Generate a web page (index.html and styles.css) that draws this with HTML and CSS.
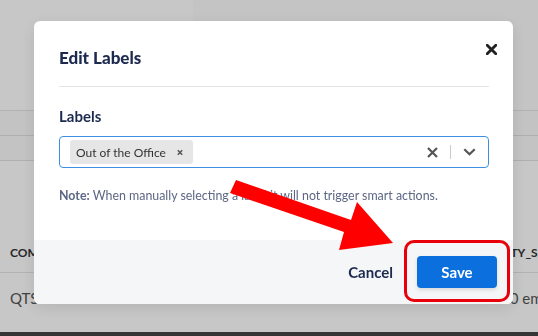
FILE: index.html
```html
<!DOCTYPE html>
<html lang="en">
  <head>
    <meta charset="UTF-8" />
    <meta name="viewport" content="width=device-width, initial-scale=1.0" />
    <title>Edit Labels</title>
    <link rel="stylesheet" href="styles.css">
  </head>
  <body>
    <div id="page">
      <div class="top">
        <div class="side"></div>
        <div class="main">
          <h1>Deals Dashboard</h1>
        </div>
      </div>
      <div class="band"></div>
      <div class="band"></div>
      <div class="table">
        <div class="row head">
          <div class="cell">COMPANY</div>
          <div class="cell">QTY_SIZE</div>
        </div>
        <div class="row">
          <div class="cell">QTS Data</div>
          <div class="cell">50 employees</div>
        </div>
      </div>
      <div class="footer-bar"></div>
    </div>

    <div id="overlay">
      <div class="modal">
        <div class="modal-header">
          <h2>Edit Labels</h2>
          <button class="close-button">
            <svg width="11" height="11" viewBox="0 0 11 11">
              <path d="M1.2 1.2L9.8 9.8M9.8 1.2L1.2 9.8" stroke="#222" stroke-width="2.8" stroke-linecap="round" />
            </svg>
          </button>
        </div>
        <div class="modal-body">
          <div class="field-label">Labels</div>
          <div class="select">
            <div class="chip">
              <span>Out of the Office</span>
              <svg width="6" height="7" viewBox="0 0 6 7">
                <path d="M0.8 1.2L5.2 5.8M5.2 1.2L0.8 5.8" stroke="#555" stroke-width="1.5" />
              </svg>
            </div>
            <div class="select-controls">
              <svg width="11" height="11" viewBox="0 0 11 11">
                <path d="M1 1L10 10M10 1L1 10" stroke="#555" stroke-width="2.2" />
              </svg>
              <span class="divider"></span>
              <svg width="13" height="8" viewBox="0 0 13 8">
                <path d="M1.3 1.3L6.5 6.3L11.7 1.3" stroke="#555" stroke-width="2.2" fill="none" />
              </svg>
            </div>
          </div>
          <p class="note"><b>Note:</b> When manually selecting a label it will not trigger smart actions.</p>
        </div>
        <div class="modal-footer">
          <button class="cancel-button">Cancel</button>
          <button class="save-button">Save</button>
        </div>
      </div>
    </div>

    <!-- annotation -->
    <div class="highlight"></div>
    <svg class="arrow" width="538" height="336" viewBox="0 0 538 336">
      <polygon points="236,180 351,220 357,202 393,243 339,250 344,232 230,193" fill="#f00" />
    </svg>
  </body>
</html>
```

FILE: styles.css
```css
* {
  box-sizing: border-box;
  margin: 0;
  padding: 0;
}

body {
  font-family: "Lato", "Liberation Sans", sans-serif;
  color: #333;
  overflow: hidden;
  height: 336px;
}

#page {
  background-color: #fff;
  height: 336px;
  display: flex;
  flex-direction: column;
}

.top {
  display: flex;
  height: 111px;
  border-bottom: 1px solid #e4e4e4;
}

.side {
  width: 193px;
  background-color: #fff;
}

.main {
  flex-grow: 1;
  background-color: #fbfbfb;
  padding: 17px 0 0 55px;
}

.main h1 {
  font-size: 26px;
  line-height: 30px;
  color: #1b2a4e;
}

.band {
  height: 25px;
  border-bottom: 1px solid #e0e0e0;
  background-color: #fafafa;
}

.table {
  flex-grow: 1;
  padding-top: 72px;
}

.row {
  display: grid;
  grid-template-columns: 491px 1fr;
  height: 40px;
  align-items: center;
  border-bottom: 1px solid #e4e4e4;
  white-space: nowrap;
  overflow: hidden;
}

.row .cell {
  padding-left: 10px;
  font-size: 15px;
  color: #555;
}

.row.head .cell {
  font-size: 12px;
  font-weight: bold;
  color: #333;
}

.row + .row {
  border-bottom: none;
  height: 50px;
}

.footer-bar {
  height: 4px;
  background-color: #454545;
}

#overlay {
  position: fixed;
  inset: 0;
  background-color: rgba(0, 0, 0, 0.22);
  padding: 21px 0 0 34px;
}

.modal {
  width: 479px;
  background-color: #fff;
  border-radius: 6px;
  overflow: hidden;
  box-shadow: 0 4px 16px rgba(0, 0, 0, 0.1);
}

.modal-header {
  display: flex;
  justify-content: space-between;
  align-items: flex-start;
  margin: 0 24px 0 25px;
  padding-top: 23px;
  height: 66px;
  border-bottom: 1px solid #e3e4e6;
}

.modal-header h2 {
  font-size: 17px;
  line-height: 24px;
  font-weight: 900;
  color: #1b2a4e;
  margin-top: 2px;
}

.close-button {
  background: none;
  border: none;
  display: flex;
  margin: 0 -8px 0 0;
  width: 11px;
  height: 11px;
}

.modal-body {
  padding: 19px 24px 0 25px;
  height: 153px;
}

.field-label {
  font-size: 15px;
  line-height: 20px;
  font-weight: 700;
  color: #1b2a4e;
  margin-bottom: 10px;
}

.select {
  display: flex;
  align-items: center;
  justify-content: space-between;
  height: 32px;
  border: 1px solid #3d8fe6;
  border-radius: 4px;
  padding: 0 12px 0 10px;
}

.chip {
  display: flex;
  align-items: center;
  gap: 11px;
  background-color: #e6e6e6;
  border-radius: 3px;
  height: 24px;
  padding: 0 10px 0 6px;
  font-size: 12px;
  color: #333;
}

.select-controls {
  display: flex;
  align-items: center;
}

.divider {
  width: 1px;
  height: 14px;
  background-color: #ccc;
  margin: 0 12px;
}

.note {
  margin-top: 20px;
  font-size: 12.4px;
  color: #5c6784;
}

.note b {
  font-weight: 700;
}

.modal-footer {
  display: flex;
  justify-content: flex-end;
  align-items: center;
  gap: 24px;
  height: 64px;
  background-color: #f5f6f8;
  padding-right: 16px;
}

.cancel-button {
  background: none;
  border: none;
  font-family: inherit;
  font-size: 15px;
  font-weight: 700;
  color: #1b2a4e;
}

.save-button {
  width: 80px;
  height: 32px;
  border: none;
  border-radius: 4px;
  background-color: #0b6fde;
  color: #fff;
  font-family: inherit;
  font-size: 15px;
  font-weight: 700;
  box-shadow: 0 2px 4px rgba(0, 0, 0, 0.12);
}

.highlight {
  position: absolute;
  left: 404px;
  top: 240px;
  width: 106px;
  height: 62px;
  border: 3px solid #e8000b;
  border-radius: 10px;
}

.arrow {
  position: absolute;
  left: 0;
  top: 0;
}
```
